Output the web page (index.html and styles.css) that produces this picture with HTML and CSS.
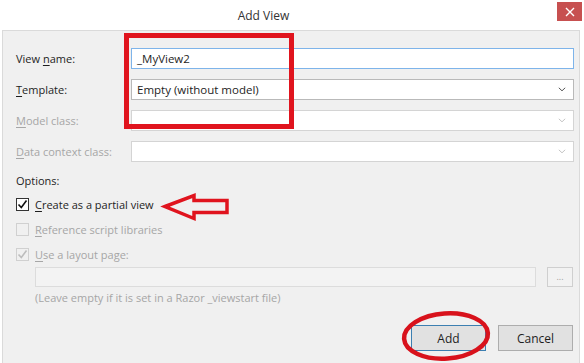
FILE: index.html
```html
<!DOCTYPE html>
<html lang="en">
<head>
    <meta charset="UTF-8">
    <title>Add View</title>
    <link rel="stylesheet" href="styles.css">
</head>
<body>
    <div class="titlebar">
        <span class="title">Add View</span>
        <span class="close">
            <svg width="10" height="10" viewBox="0 0 10 10"><path d="M1 1L9 9M9 1L1 9" stroke="#fff" stroke-width="1.4"/></svg>
        </span>
    </div>

    <div class="dialog">
        <div class="fields">
            <label class="lbl">View <u>n</u>ame:</label>
            <div class="box box-focus">_MyView2</div>

            <label class="lbl"><u>T</u>emplate:</label>
            <div class="box select">Empty (without model)
                <svg class="chev" width="8" height="5" viewBox="0 0 8 5"><path d="M0.8 0.8L4 3.8L7.2 0.8" fill="none" stroke="#555" stroke-width="1"/></svg>
            </div>

            <label class="lbl off"><u>M</u>odel class:</label>
            <div class="box select off">
                <svg class="chev" width="8" height="5" viewBox="0 0 8 5"><path d="M0.8 0.8L4 3.8L7.2 0.8" fill="none" stroke="#c4c4c4" stroke-width="1"/></svg>
            </div>

            <label class="lbl off"><u>D</u>ata context class:</label>
            <div class="box select off">
                <svg class="chev" width="8" height="5" viewBox="0 0 8 5"><path d="M0.8 0.8L4 3.8L7.2 0.8" fill="none" stroke="#c4c4c4" stroke-width="1"/></svg>
            </div>
        </div>

        <div class="options">Options:</div>

        <div class="check-row">
            <span class="check">
                <svg width="11" height="11" viewBox="0 0 11 11"><path d="M1.5 5.5L4.3 8.5L9.5 1.5" fill="none" stroke="#111" stroke-width="1.6"/></svg>
            </span>
            <span><u>C</u>reate as a partial view</span>
        </div>
        <div class="check-row off">
            <span class="check check-off"></span>
            <span><u>R</u>eference script libraries</span>
        </div>
        <div class="check-row off">
            <span class="check check-off">
                <svg width="11" height="11" viewBox="0 0 11 11"><path d="M1.5 5.5L4.3 8.5L9.5 1.5" fill="none" stroke="#bdbdbd" stroke-width="1.6"/></svg>
            </span>
            <span><u>U</u>se a layout page:</span>
        </div>

        <div class="layout-row">
            <div class="box box-off"></div>
            <div class="dots">...</div>
        </div>
        <div class="hint">(Leave empty if it is set in a Razor _viewstart file)</div>

        <div class="buttons">
            <button class="btn btn-default">Add</button>
            <button class="btn">Cancel</button>
        </div>
    </div>

    <!-- red annotations drawn over the dialog -->
    <svg class="marks" width="584" height="363" viewBox="0 0 584 363">
        <rect x="126.5" y="35.5" width="165" height="91" fill="none" stroke="#e0141e" stroke-width="5"/>
        <path d="M165 206.5L194 195.5L194 200.5L227 200.5L227 212.5L194 212.5L194 218.5Z" fill="none" stroke="#e0141e" stroke-width="3.5" stroke-linejoin="miter"/>
        <ellipse cx="446" cy="336" rx="42" ry="22.5" fill="none" stroke="#d8121c" stroke-width="4.5" transform="rotate(-4 446 336)"/>
    </svg>
</body>
</html>
```

FILE: styles.css
```css
body {
    margin: 0;
    width: 584px;
    height: 363px;
    background: #ffffff;
    font-family: "Open Sans", "Liberation Sans", sans-serif;
    font-size: 11px;
    color: #1e1e1e;
    position: relative;
    overflow: hidden;
}
.titlebar {
    height: 30px;
    display: flex;
    align-items: flex-start;
}
.title {
    flex: 1;
    text-align: center;
    padding-right: 30px;
    line-height: 32px;
    font-size: 12px;
    color: #333;
}
.close {
    width: 25px;
    height: 19px;
    margin-top: 2px;
    margin-right: 2px;
    background: #c75050;
    display: flex;
    align-items: center;
    justify-content: center;
}
.dialog {
    margin: 0 4px 0 2px;
    height: 326px;
    border: 1px solid #dadada;
    background: #f0f0f0;
    padding: 17px 5px 0 13px;
}
.fields {
    display: grid;
    grid-template-columns: 115px 1fr;
    grid-auto-rows: 21px;
    row-gap: 10px;
    align-items: center;
}
.lbl {
    line-height: 21px;
}
.off {
    color: #a6a6a6;
}
u {
    text-decoration-thickness: 1px;
    text-underline-offset: 2px;
}
.box {
    height: 21px;
    box-sizing: border-box;
    background: #fff;
    border: 1px solid #b9b9b9;
    padding: 0 5px;
    line-height: 19px;
    font-size: 11.5px;
    color: #1e1e1e;
    display: flex;
    align-items: center;
}
.box-focus {
    border-color: #7eb4ea;
}
.select.off {
    border-color: #d4d4d4;
}
.chev {
    margin-left: auto;
    margin-right: 2px;
}
.options {
    margin-top: 11px;
    line-height: 16px;
}
.options + .check-row {
    margin-top: 3px;
}
.check-row {
    height: 25px;
    display: flex;
    align-items: center;
    gap: 6px;
}
.check {
    width: 13px;
    height: 13px;
    box-sizing: border-box;
    border: 1px solid #333;
    background: #fff;
    display: flex;
    align-items: center;
    justify-content: center;
}
.check-off {
    border-color: #d0d0d0;
    background: #f0f0f0;
}
.layout-row {
    display: flex;
    gap: 11px;
    margin-left: 19px;
    margin-right: 1px;
}
.box-off {
    flex: 1;
    height: 20px;
    background: #f3f3f3;
    border-color: #dcdcdc;
}
.dots {
    width: 26px;
    height: 20px;
    box-sizing: border-box;
    border: 1px solid #cfcfcf;
    background: #f2f2f2;
    color: #a0a0a0;
    font-size: 9px;
    text-align: center;
    line-height: 17px;
}
.hint {
    margin-top: 3px;
    margin-left: 19px;
    line-height: 16px;
    color: #a6a6a6;
}
.buttons {
    margin-top: 19px;
    margin-right: 1px;
    display: flex;
    justify-content: flex-end;
    gap: 12px;
}
.btn {
    width: 75px;
    height: 26px;
    border: 1px solid #adadad;
    background: #e1e1e1;
    font-family: inherit;
    font-size: 12px;
    color: #1e1e1e;
    padding: 0;
}
.btn-default {
    border-color: #3c7fb1;
}
.marks {
    position: absolute;
    top: 0;
    left: 0;
    pointer-events: none;
}
```
